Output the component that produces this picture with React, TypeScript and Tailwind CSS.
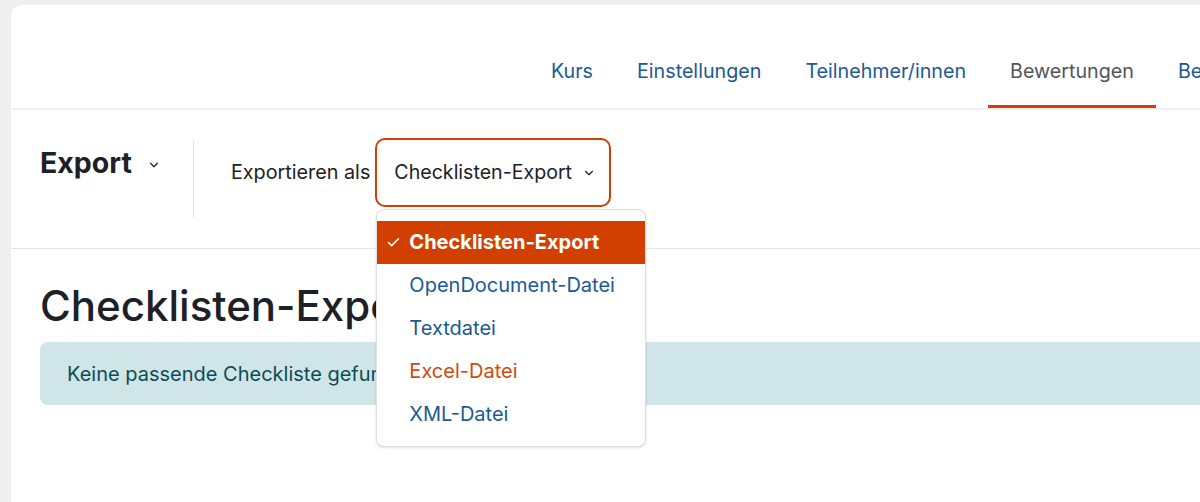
import React from "react";
import { Check, ChevronDown } from "lucide-react";

const tabs = [
    { label: "Kurs", active: false },
    { label: "Einstellungen", active: false },
    { label: "Teilnehmer/innen", active: false },
    { label: "Bewertungen", active: true },
    { label: "Berichte", active: false },
];

const formats = [
    { label: "Checklisten-Export", selected: true },
    { label: "OpenDocument-Datei" },
    { label: "Textdatei" },
    { label: "Excel-Datei", hover: true },
    { label: "XML-Datei" },
];

const App: React.FC = () => {
    return (
        <div
            className="h-[502px] w-[1200px] overflow-hidden bg-[#efefef] pl-[11px] pt-[5px]"
            style={{ fontFamily: "Inter, 'Noto Sans', sans-serif" }}
        >
            <div className="h-[600px] w-[1300px] rounded-tl-xl bg-white text-[#1d2125]">
                {/* secondary navigation */}
                <nav className="flex h-[105px] items-end border-b-2 border-[#efefef] pl-[518px]">
                    {tabs.map((tab) => (
                        <div
                            key={tab.label}
                            className={
                                "whitespace-nowrap border-b-[3px] px-[22px] pb-[20px] text-[19.7px] leading-[27px] " +
                                (tab.active ? "border-[#d14000] text-[#555555]" : "border-transparent text-[#1b5a93]")
                            }
                        >
                            {tab.label}
                        </div>
                    ))}
                </nav>

                {/* tertiary navigation */}
                <div className="flex h-[139px] items-start border-b border-[#e6e6e6] pl-[29px] pt-[28px]">
                    <div className="mt-[9px] flex items-center">
                        <span className="text-[28.5px] font-bold leading-[32px]">Export</span>
                        <ChevronDown className="ml-[15px] mt-[3px] h-[14px] w-[14px]" strokeWidth={2} />
                    </div>
                    <div className="ml-[32px] mt-[2px] h-[78px] w-px bg-[#dee2e6]" />
                    <div className="ml-[37px] flex h-[69px] items-center">
                        <span className="whitespace-nowrap text-[19.8px]">Exportieren als</span>
                        <div className="relative ml-[5px]">
                            <div className="flex h-[69px] w-[236px] items-center rounded-[10px] border-2 border-[#d14000] pl-[17px]">
                                <span className="whitespace-nowrap text-[19.6px]">Checklisten-Export</span>
                                <ChevronDown className="ml-[10px] mt-[1px] h-[14px] w-[14px]" strokeWidth={2} />
                            </div>
                            <ul className="absolute left-px top-[71px] z-10 w-[270px] rounded-lg border border-[#dfdfdf] bg-white py-[11px] shadow-sm">
                                {formats.map((f) => (
                                    <li
                                        key={f.label}
                                        className={
                                            "flex h-[42.8px] items-center whitespace-nowrap text-[20px] " +
                                            (f.selected
                                                ? "bg-[#d14000] font-bold text-white"
                                                : f.hover
                                                ? "text-[#d14a0a]"
                                                : "text-[#1b5a93]")
                                        }
                                    >
                                        <span className="flex w-[32px] justify-end pr-[8px]">
                                            {f.selected && <Check className="h-[15px] w-[15px]" strokeWidth={2.5} />}
                                        </span>
                                        {f.label}
                                    </li>
                                ))}
                            </ul>
                        </div>
                    </div>
                </div>

                {/* main region */}
                <div className="pl-[29px]">
                    <h2 className="mt-[30px] text-[42px] font-medium leading-[53px]">Checklisten-Export</h2>
                    <div className="mt-[10px] flex h-[63px] w-[1200px] items-center rounded-lg bg-[#cfe5e8] pl-[27px] text-[20px] text-[#0e4b55]">
                        Keine passende Checkliste gefunden.
                    </div>
                </div>
            </div>
        </div>
    );
};

export default App;
